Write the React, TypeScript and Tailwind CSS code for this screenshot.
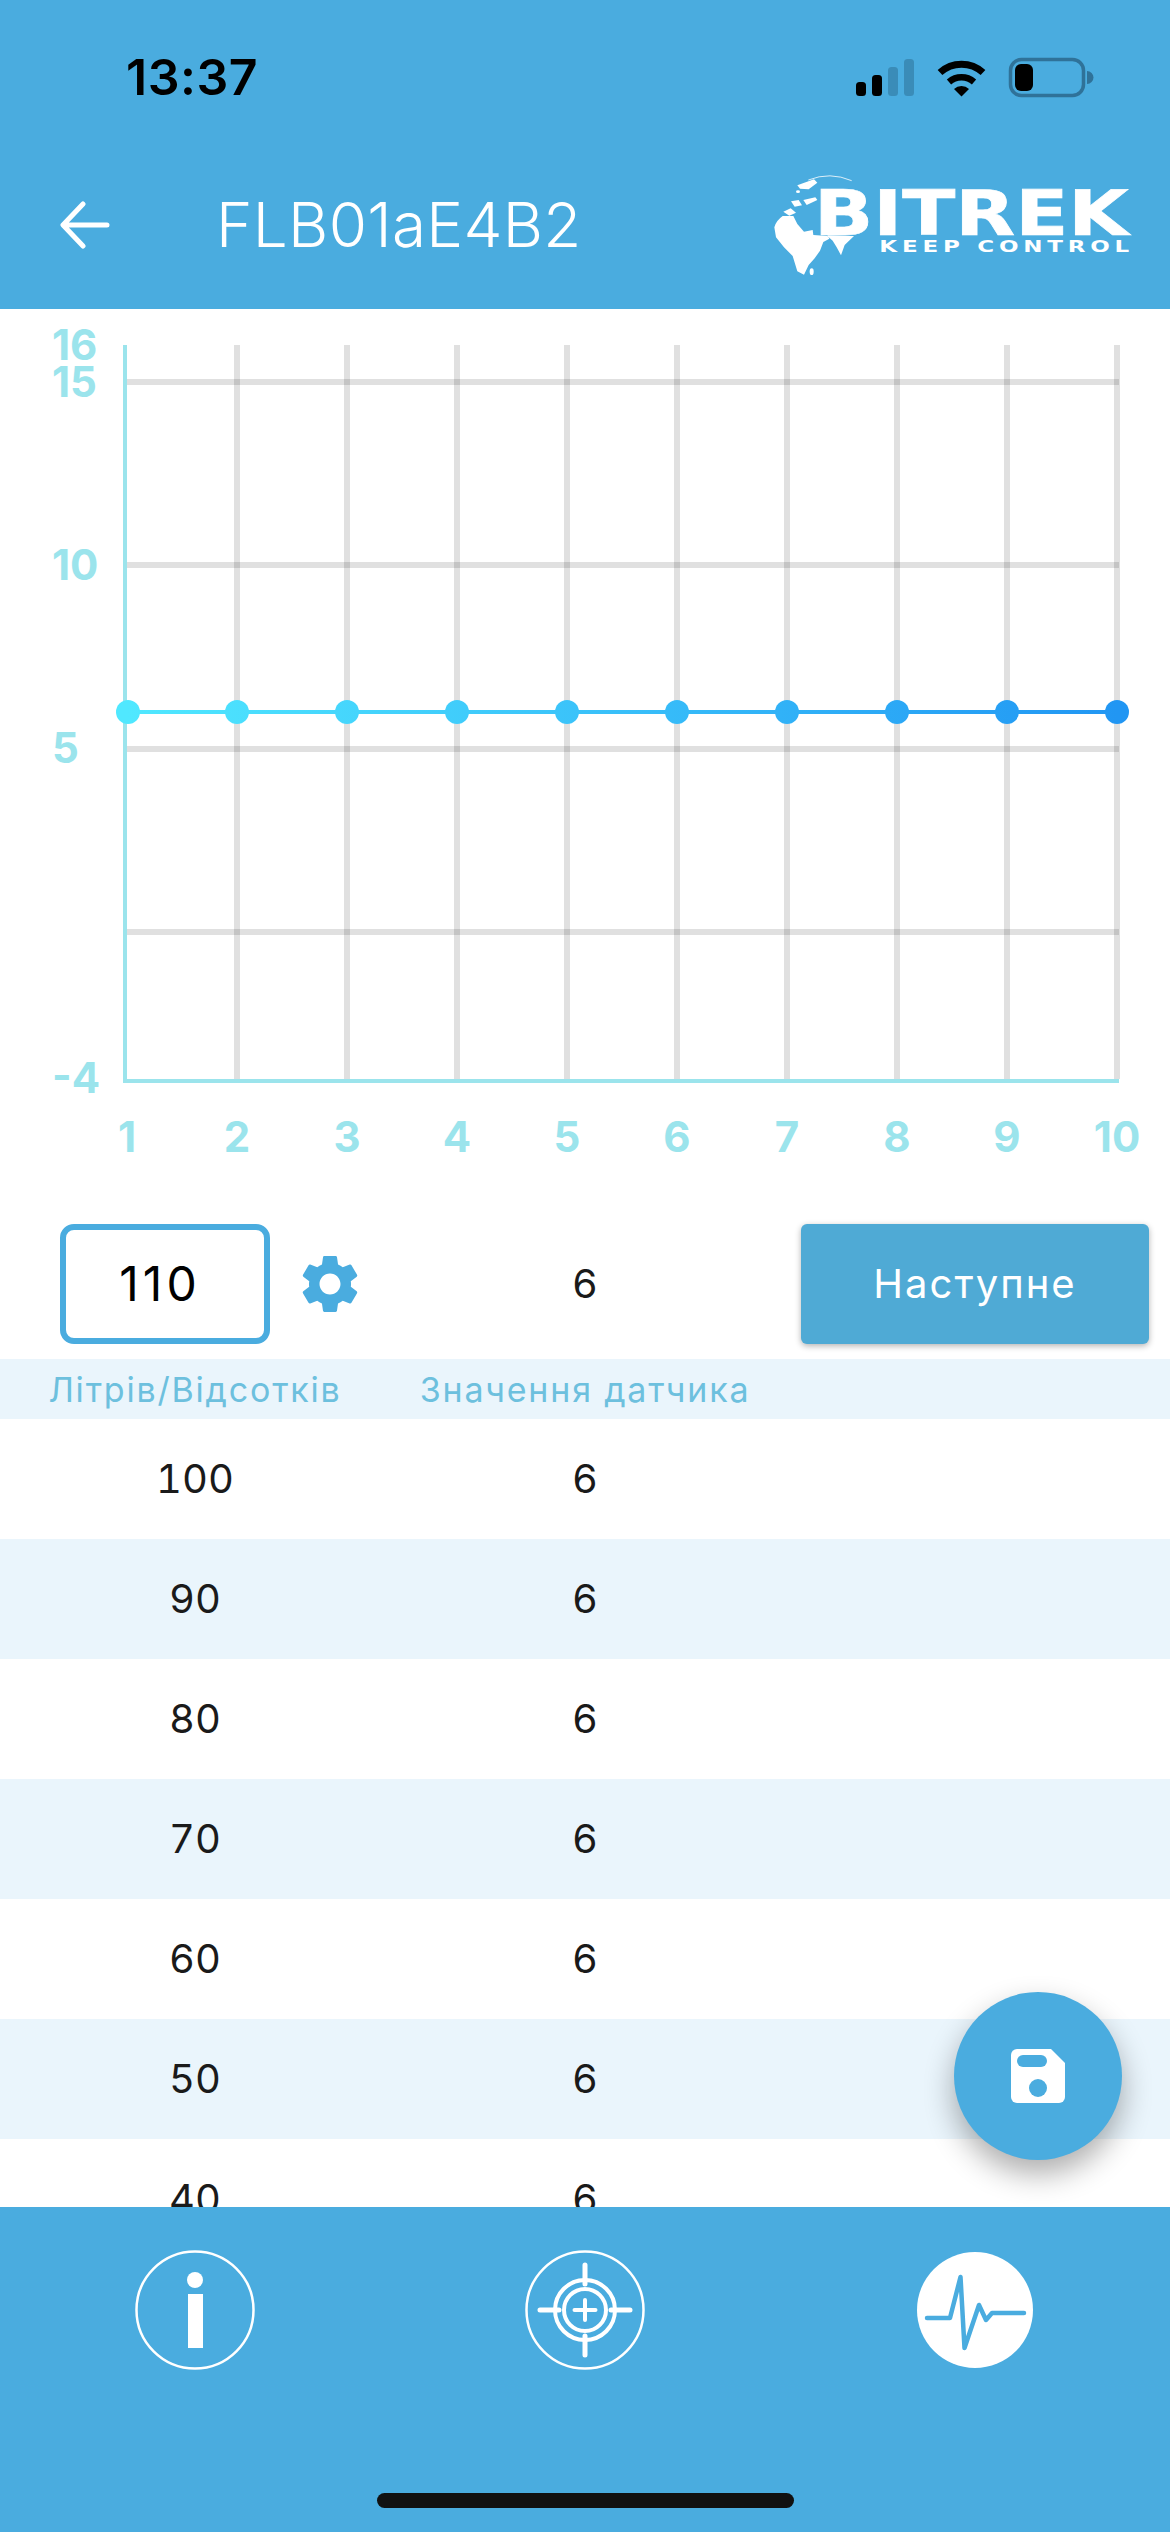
import { MdSettings } from "react-icons/md";

const BLUE = "#4AACDF";
const AXIS = "#9BE4EC";
const GRID = "rgba(0,0,0,0.12)";

const gridX = [127, 237, 347, 457, 567, 677, 787, 897, 1007, 1117];
const pointX = [128, 237, 347, 457, 567, 677, 787, 897, 1007, 1117];
const gridY = [382, 565, 749, 932];
const yLabels: [string, number][] = [
  ["16", 360],
  ["15", 397],
  ["10", 580],
  ["5", 763],
  ["-4", 1093],
];
const rows = [100, 90, 80, 70, 60, 50, 40];

function StatusBar() {
  return (
    <div className="relative h-[115px] w-full">
      <span className="absolute left-[126px] top-[49px] text-[50px] leading-[56px] font-semibold tracking-[0.5px] text-black [font-family:Inter,sans-serif]">
        13:37
      </span>
      <svg className="absolute left-[850px] top-[50px]" width="250" height="54" viewBox="850 50 250 54">
        <rect x="856" y="82" width="10" height="14" rx="3.5" fill="#000" />
        <rect x="872" y="75" width="10" height="21" rx="3.5" fill="#000" />
        <rect x="888" y="67" width="10" height="29" rx="3.5" fill="#3A8CB8" />
        <rect x="904" y="59" width="10" height="37" rx="3.5" fill="#3A8CB8" />
        <path d="M940 72.5 A32 32 0 0 1 983 72.5" fill="none" stroke="#000" strokeWidth="7" />
        <path d="M949 82 A19 19 0 0 1 974 82" fill="none" stroke="#000" strokeWidth="6.5" />
        <path d="M954 89 A11 11 0 0 1 969 89 L961.5 96.5 Z" fill="#000" />
        <rect x="1010.5" y="59.5" width="73" height="36" rx="11" fill="none" stroke="#2F7299" strokeWidth="3.5" />
        <rect x="1015" y="64" width="18" height="27" rx="6" fill="#000" />
        <path d="M1087 71 A6 6 0 0 1 1087 84 Z" fill="#2F7299" />
      </svg>
    </div>
  );
}

function BitrekLogo() {
  return (
    <svg width="430" height="150" viewBox="0 0 1290 450">
      <g fill="#fff">
        <path d="M103 232 Q108 212 128 198 L160 198 L172 222 L192 245 L218 240 L220 255 L262 258 L278 272 L290 292 L303 316 L314 285 L342 258 L262 256 L268 266 L250 276 L240 302 L224 325 L206 345 L192 374 L172 364 L158 318 L132 292 L108 262 Z" />
        <path d="M130 185 L152 175 L168 188 L148 197 Z" />
        <path d="M153 154 L176 150 L186 166 L164 170 Z" />
        <path d="M190 150 L226 142 L232 150 L200 165 Z" />
        <path d="M172 106 L222 88 L232 98 L206 118 L180 116 Z" />
        <ellipse cx="215" cy="365" rx="6" ry="10" />
        <ellipse cx="174" cy="125" rx="6" ry="4" />
      </g>
      <path d="M205 90 Q270 64 335 92" fill="none" stroke="#fff" strokeWidth="3" opacity="0.8" />
      <text
        x="222"
        y="254"
        textLength="944"
        lengthAdjust="spacingAndGlyphs"
        fontFamily="'DejaVu Sans', sans-serif"
        fontWeight="700"
        fontSize="186"
        fill="#fff"
        stroke="#fff"
        strokeWidth="2"
      >
        BITREK
      </text>
      <text
        x="418"
        y="306"
        textLength="764"
        lengthAdjust="spacingAndGlyphs"
        letterSpacing="10"
        fontFamily="'DejaVu Sans', sans-serif"
        fontWeight="700"
        fontSize="48"
        fill="#fff"
      >
        KEEP CONTROL
      </text>
    </svg>
  );
}

function AppBar() {
  return (
    <div className="flex h-[194px] w-full items-start">
      <svg className="ml-[60px] mt-[86px]" width="50" height="48" viewBox="0 0 50 48" fill="none">
        <path d="M47 24 H4 M23 3 L3 24 L23 45" stroke="#fff" strokeWidth="5" strokeLinecap="round" strokeLinejoin="round" />
      </svg>
      <span className="ml-[106px] mt-[72px] text-[62px] leading-[76px] font-light tracking-[0.3px] text-white [font-family:Inter,sans-serif]">
        FLB01aE4B2
      </span>
      <div className="ml-auto mt-[35px]">
        <BitrekLogo />
      </div>
    </div>
  );
}

function Chart() {
  return (
    <svg className="block" width="1170" height="915" viewBox="0 309 1170 915">
      <defs>
        <linearGradient id="lineFill" gradientUnits="userSpaceOnUse" x1="128" y1="0" x2="1117" y2="0">
          <stop offset="0" stopColor="#50E8FF" />
          <stop offset="1" stopColor="#2196F3" />
        </linearGradient>
      </defs>
      {gridY.map((y) => (
        <rect key={y} x="127" y={y - 3} width="992" height="6" fill={GRID} />
      ))}
      {gridX.slice(1).map((x) => (
        <rect key={x} x={x - 3} y="345" width="6" height="734" fill={GRID} />
      ))}
      <rect x="123" y="345" width="4" height="738" fill={AXIS} />
      <rect x="123" y="1079" width="996" height="4" fill={AXIS} />
      <rect x="128" y="710" width="989" height="4" fill="url(#lineFill)" />
      {pointX.map((x) => (
        <circle key={x} cx={x} cy="712" r="12" fill="url(#lineFill)" />
      ))}
      <g fontFamily="Inter, sans-serif" fontSize="42" fontWeight="700" fill={AXIS}>
        {yLabels.map(([label, y]) => (
          <text key={label} x="52" y={y}>
            {label}
          </text>
        ))}
        {gridX.map((x, i) => (
          <text key={x} x={x} y="1152" textAnchor="middle">
            {i + 1}
          </text>
        ))}
      </g>
    </svg>
  );
}

function Controls() {
  return (
    <div className="grid h-[135px] grid-cols-3 items-start">
      <div className="flex items-center pl-[60px]">
        <div className="flex h-[120px] w-[210px] items-center justify-center rounded-[14px] border-[6px] border-[#4AACDF] text-[48px] tracking-[4px] text-black [font-family:Inter,sans-serif]">
          <span className="-ml-[10px]">110</span>
        </div>
        <MdSettings className="ml-[25px] text-[#4AACDF]" size={70} />
      </div>
      <div className="flex h-[120px] items-center justify-center text-[40px] text-[#1a1a1a] [font-family:Inter,sans-serif]">
        6
      </div>
      <div className="flex justify-center">
        <div className="flex h-[120px] w-[348px] items-center justify-center rounded-[6px] bg-[#4FAAD5] text-[40px] font-normal tracking-[2px] text-white shadow-[0_2px_6px_rgba(0,0,0,0.3)] [font-family:Inter,sans-serif]">
          Наступне
        </div>
      </div>
    </div>
  );
}

function Table() {
  return (
    <div className="min-h-0 flex-1 overflow-hidden [font-family:Inter,sans-serif]">
      <div className="grid h-[60px] grid-cols-3 items-center bg-[#EAF5FC] text-center text-[34px] tracking-[1.8px] text-[#6DC0DE]">
        <span>Літрів/Відсотків</span>
        <span>Значення датчика</span>
        <span />
      </div>
      {rows.map((value, i) => (
        <div
          key={value}
          className={
            i % 2 === 0
              ? "grid h-[120px] grid-cols-3 items-center bg-white text-center text-[40px] text-[#1a1a1a] tabular-nums"
              : "grid h-[120px] grid-cols-3 items-center bg-[#EAF5FC] text-center text-[40px] text-[#1a1a1a] tabular-nums"
          }
        >
          <span>{value}</span>
          <span>6</span>
          <span />
        </div>
      ))}
    </div>
  );
}

function BottomNav() {
  return (
    <div className="relative h-[325px] w-full shrink-0 bg-[#4AACDF]">
      <div className="grid h-[206px] grid-cols-3 items-center">
        <div className="flex justify-center">
          <svg width="120" height="120" viewBox="0 0 120 120" fill="none">
            <circle cx="60" cy="60" r="58.5" stroke="#fff" strokeWidth="2.5" />
            <circle cx="60" cy="30" r="8" fill="#fff" />
            <rect x="53" y="44" width="15" height="54" fill="#fff" />
          </svg>
        </div>
        <div className="flex justify-center">
          <svg width="120" height="120" viewBox="0 0 120 120" fill="none" stroke="#fff">
            <circle cx="60" cy="60" r="58.5" strokeWidth="2.5" />
            <circle cx="60" cy="60" r="30" strokeWidth="4" />
            <circle cx="60" cy="60" r="21" strokeWidth="4" />
            <path
              d="M60 15 V34 M60 86 V105 M15 60 H34 M86 60 H105"
              strokeWidth="5"
              strokeLinecap="round"
            />
            <path d="M49.5 60 H70.5 M60 50 V70" strokeWidth="4" strokeLinecap="round" />
          </svg>
        </div>
        <div className="flex justify-center">
          <svg width="118" height="118" viewBox="0 0 118 118">
            <circle cx="59" cy="59" r="58" fill="#fff" />
            <path
              d="M11 67 H34 L44.5 26 L48.5 97 L63 54 L70 69 L76 62 H108"
              fill="none"
              stroke={BLUE}
              strokeWidth="4.5"
              strokeLinecap="round"
              strokeLinejoin="round"
            />
          </svg>
        </div>
      </div>
      <div className="absolute bottom-[24px] left-[377px] h-[15px] w-[417px] rounded-full bg-[#111]" />
    </div>
  );
}

export default function App() {
  return (
    <div className="relative flex h-[2532px] w-[1170px] flex-col overflow-hidden bg-white">
      <div className="h-[309px] w-full shrink-0 bg-[#4AACDF]">
        <StatusBar />
        <AppBar />
      </div>
      <Chart />
      <Controls />
      <Table />
      <BottomNav />
      <div className="absolute left-[954px] top-[1992px] flex h-[168px] w-[168px] items-center justify-center rounded-full bg-[#4AACDF] shadow-[0_14px_30px_rgba(0,0,0,0.32)]">
        <svg width="54" height="54" viewBox="0 0 54 54">
          <path
            d="M6 0 H40 L54 14 V48 A6 6 0 0 1 48 54 H6 A6 6 0 0 1 0 48 V6 A6 6 0 0 1 6 0 Z"
            fill="#fff"
          />
          <rect x="6" y="6" width="30" height="12" rx="6" fill="#4AACDF" />
          <circle cx="27" cy="39" r="9" fill="#4AACDF" />
        </svg>
      </div>
    </div>
  );
}
